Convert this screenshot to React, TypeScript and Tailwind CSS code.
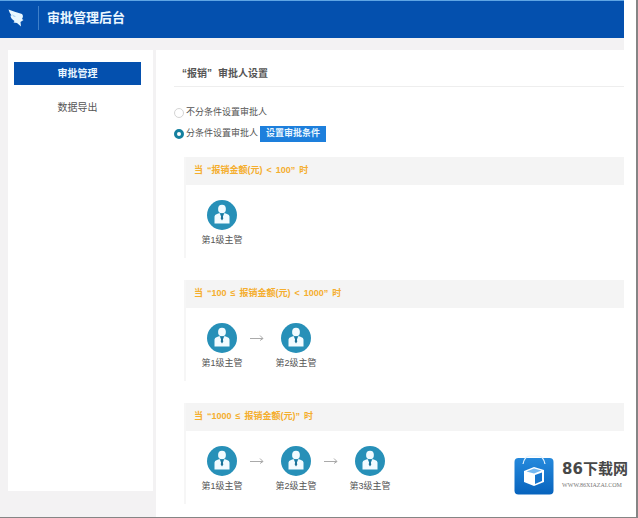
import { Fragment, useState } from "react";

type Condition = { parts: string[]; levels: number };

const conditions: Condition[] = [
  { parts: ["当", "“报销金额(元)", "<", "100”", "时"], levels: 1 },
  { parts: ["当", "“100", "≤", "报销金额(元)", "<", "1000”", "时"], levels: 2 },
  { parts: ["当", "“1000", "≤", "报销金额(元)”", "时"], levels: 3 },
];

function BirdLogo() {
  return (
    <svg viewBox="0 0 16 18" className="h-[18px] w-4" aria-hidden="true">
      <path d="M0.5 0.5 C5 2 10 4 14 5 C15.5 6.5 15 8.5 14 10 L15.5 11 L12.5 13 L13 17.5 L9 14 L5.5 13.5 L6.5 12 C4 10.5 2.5 8.5 2.5 6.5 L3.5 6.5 C2 4.5 1 2.5 0.5 0.5 Z" fill="#e8f7ff" />
      <path d="M3.5 5 L8 7.5 L6 8 Z" fill="#a9d4f3" />
    </svg>
  );
}

function Avatar() {
  return (
    <svg viewBox="0 0 30 30" className="size-[30px]" aria-hidden="true">
      <circle cx="15" cy="15" r="15" fill="#2790b8" />
      <ellipse cx="15" cy="9" rx="3.9" ry="4.3" fill="#f2fbff" />
      <path d="M7.5 23.5 V16.5 Q7.5 14.5 10 14 L12.5 13 L15 18.5 L17.5 13 L20 14 Q22.5 14.5 22.5 16.5 V23.5 Z" fill="#f2fbff" />
      <path d="M14 13.5 H16 L15.6 15 L16.3 18.5 L15 20.5 L13.7 18.5 L14.4 15 Z" fill="#1b7096" />
    </svg>
  );
}

function Arrow() {
  return (
    <svg viewBox="0 0 14 8" className="mt-[11px] mr-2 ml-1 h-2 w-3.5" fill="none" stroke="#aaa" aria-hidden="true">
      <path d="M0 4.5 H13 M10 1.5 L13 4.5 L10 6.5" />
    </svg>
  );
}

function ConditionCard({ parts, levels }: Condition) {
  return (
    <section className="border-l-2 border-[#f6f6f6]">
      <h2 className="flex h-7 items-center gap-1 bg-[#f4f4f4] px-2 text-[9px] font-bold text-[#f5ae2e]">
        {parts.map((part, i) => (
          <span key={i}>{part}</span>
        ))}
      </h2>
      <div className="flex px-3 pt-[15px] pb-3">
        {Array.from({ length: levels }, (_, i) => (
          <Fragment key={i}>
            {i > 0 && <Arrow />}
            <div className="flex w-12 flex-col items-center gap-1 text-[9px] leading-3 text-[#555]">
              <Avatar />
              <span className="whitespace-nowrap">第{i + 1}级主管</span>
            </div>
          </Fragment>
        ))}
      </div>
    </section>
  );
}

function Watermark() {
  return (
    <div className="absolute right-2 bottom-[22px] flex items-center gap-2">
      <svg viewBox="0 0 40 40" className="size-10" aria-hidden="true">
        <defs>
          <linearGradient id="bag" x1="0" y1="0" x2="0" y2="1">
            <stop offset="0" stopColor="#2589dc" />
            <stop offset="1" stopColor="#0763bd" />
          </linearGradient>
        </defs>
        <rect x="0.5" y="3" width="39" height="36.5" rx="4" fill="url(#bag)" />
        <path d="M9 9 C10 4 12 1 16 1 H24 C28 1 30 4 31 9" fill="none" stroke="#e6f4ff" strokeWidth="1.2" />
        <path d="M10 16 L20 12 L30 15 V27 L20 31 L10 27 Z" fill="#fff" />
        <path d="M12.5 16.5 L20 13.5 L27.5 15.5 L20 18.5 Z" fill="#75b8f1" />
        <path d="M21 20 L28 17.5 V26 L21 29 Z" fill="#1674cc" />
      </svg>
      <div className="flex flex-col">
        <span className="text-[15px] leading-5 font-bold whitespace-nowrap text-[#484848]">
          <span className="font-['DejaVu_Sans','Noto_Sans_CJK_SC',sans-serif]">86</span>下载网
        </span>
        <span className="font-['Liberation_Serif',serif] text-[6px] leading-3 text-[#777]">WWW.86XIAZAI.COM</span>
      </div>
    </div>
  );
}

export default function App() {
  const [mode, setMode] = useState("conditional");
  const radio =
    "size-2.5 appearance-none rounded-full border border-[#d4d4d4] bg-white checked:border-[3px] checked:border-[#15809f]";

  return (
    <div className="relative flex h-screen flex-col overflow-hidden border-r-2 border-b border-[#858585] bg-white pr-3 font-['Liberation_Sans','Noto_Sans_CJK_SC',sans-serif] text-[#555]">
      <header className="flex h-[38px] shrink-0 items-center border-t border-[#5fa5e4] bg-[#0450ae] px-2 pb-1">
        <BirdLogo />
        <span className="ml-3.5 h-6 w-px bg-[#3e7fc9]" />
        <h1 className="ml-2 text-[13px] font-bold text-[#e9f6ff]">审批管理后台</h1>
      </header>

      <div className="flex min-h-0 flex-1 gap-[3px] bg-[#f3f2f3] pt-3 pl-2">
        <nav className="mb-[26px] flex w-[145px] shrink-0 flex-col gap-[11px] bg-white pt-3 pr-3 pl-1.5 text-[10px]">
          <a href="#approval" className="flex h-[23px] items-center justify-center bg-[#0450ae] font-bold text-[#e9f6ff]">
            审批管理
          </a>
          <a href="#export" className="flex h-[23px] items-center justify-center">数据导出</a>
        </nav>

        <main className="min-w-0 flex-1 bg-white pl-[18px]">
          <h2 className="flex h-[37px] items-center gap-1.5 border-b border-[#eee] px-2 pt-2.5 text-[10px] font-bold">
            <span>“报销”</span>
            <span>审批人设置</span>
          </h2>

          <fieldset className="mt-[17px] flex flex-col gap-px text-[9px]">
            <label className="flex h-[18px] items-center gap-0.5">
              <input type="radio" name="mode" className={radio} checked={mode === "plain"} onChange={() => setMode("plain")} />
              不分条件设置审批人
            </label>
            <div className="flex h-[22px] items-center gap-0.5">
              <label className="flex items-center gap-0.5">
                <input type="radio" name="mode" className={radio} checked={mode === "conditional"} onChange={() => setMode("conditional")} />
                分条件设置审批人
              </label>
              <button type="button" className="h-4 bg-[#1d7fdc] px-1.5 font-bold text-[#e9f6ff]">设置审批条件</button>
            </div>
          </fieldset>

          <div className="mt-3 flex flex-col gap-[22px] pl-2.5">
            {conditions.map((condition) => (
              <ConditionCard key={condition.levels} {...condition} />
            ))}
          </div>
        </main>
      </div>

      <Watermark />
    </div>
  );
}
